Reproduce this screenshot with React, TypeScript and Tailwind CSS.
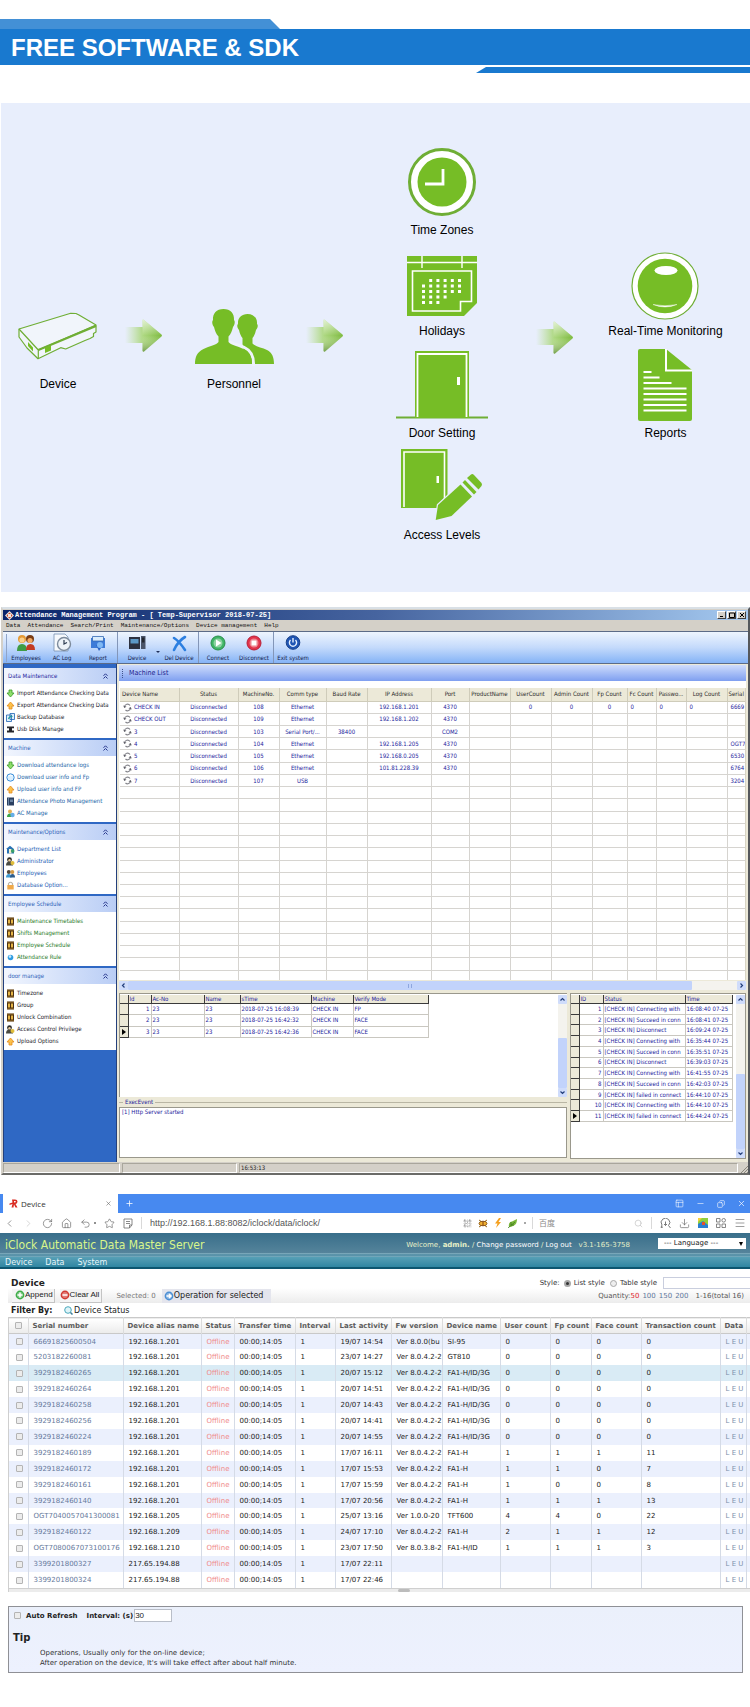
import type { ReactNode } from 'react';
import {
  ChevronLeft, ChevronRight, RotateCw, House, Undo2, Star, QrCode, Search,
  Menu, Download, PanelsTopLeft, Minus, Copy, X, Plus,
} from 'lucide-react';

const G = '#76bd26';

/* ---------- workflow drawings ---------- */

function DeviceIcon() {
  return (
    <svg width="80" height="48" viewBox="0 0 80 48" fill="none" stroke="#6fae35" strokeWidth="1.2" strokeLinejoin="round">
      <path fill="#f1f5fb" d="M1 17 52.7 1.3 58 1.5 61 3 78 13v7l-2.500 1.500v3L72 26.500l-5 2L47.700 37l-5-1.300L20 46.700 9 36 1 25z" />
      <path d="M1 17 20.300 38v8.700M20.300 38 78 13" />
      <path strokeWidth="2" d="M20.300 38 78 14" />
      <path fill={G} stroke="none" d="M27 35.500 33 33.500v5l-6 2.500zM10 30l5 5.500v4L10 34z" />
    </svg>
  );
}

function FlowArrow() {
  return (
    <svg width="38" height="34" viewBox="0 0 38 34">
      <defs>
        <linearGradient id="tail" x1="0" x2="1" y1="0" y2="0">
          <stop offset="0" stopColor="#b5dd8a" stopOpacity="0" />
          <stop offset=".5" stopColor="#a9d678" stopOpacity=".95" />
          <stop offset="1" stopColor="#7dba3e" />
        </linearGradient>
        <linearGradient id="shade" x1="0" x2="0" y1="0" y2="1">
          <stop offset="0" stopColor="#fff" stopOpacity=".65" />
          <stop offset=".5" stopColor="#fff" stopOpacity="0" />
          <stop offset="1" stopColor="#4f7a2c" stopOpacity=".6" />
        </linearGradient>
      </defs>
      <path d="M0 8h17.500V1.500q0-1.500 1.500-.5L36.500 15.500q1 1 0 2L19 32.500q-1.500.5-1.500-1V24H0z" fill="url(#tail)" />
      <path d="M17.500 8V1.500q0-1.500 1.500-.5L36.500 15.500q1 1 0 2L19 32.500q-1.500.5-1.500-1z" fill="url(#shade)" />
    </svg>
  );
}

function PersonnelIcon() {
  return (
    <svg width="79" height="57" viewBox="0 0 79 57" fill={G}>
      <path d="M52.500 5c-6 0-10 4-9.500 10-1.500 1-.5 4.500 1 6 .8 3.500 1.800 6 3.500 8v6l4 20H79c0-7-2-11.500-7-14-5-2.400-12-3.500-14.500-6.500V29c1.700-2 2.700-4.500 3.500-8 1.500-1.500 2.500-5 1-6 .5-6-3.500-10-9.500-10z" />
      <path stroke="#eef3fb" strokeWidth="3" d="M58.500 57c.5-9-1.500-15-9-18.500-6-3-13-3.500-15-6.500" fill="none" />
      <path d="M28.500 0c-7 0-11 4.500-10.500 11-1.500 1.500-.5 5.500 1 7 1 4 2 7 4.500 9.500V33c-2 3-9 4-15 7C2 43 0 48 0 55h57c0-7-2-12-8.500-15-6-3-13-4-15-7v-5.500C36 25 37 22 38 18c1.500-1.500 2.500-5.500 1-7 .5-6.500-3.500-11-10.500-11z" />
    </svg>
  );
}

function ClockIcon() {
  return (
    <svg width="70" height="70" viewBox="0 0 70 70">
      <circle cx="35" cy="35" r="32.500" fill="#fff" stroke="#6fae35" strokeWidth="3" />
      <circle cx="35" cy="35" r="24.500" fill={G} />
      <path d="M36 22v15H18" fill="none" stroke="#fff" strokeWidth="2.800" />
    </svg>
  );
}

const DAYS = [[1, 2, 3, 4, 5], [0, 1, 2, 3, 4, 5], [0, 1, 2, 3, 4, 5], [0, 1, 2, 3], [0, 1, 2]];

function CalendarIcon() {
  return (
    <svg width="70" height="60" viewBox="0 0 70 60">
      <path d="M0 0h70v47L57 60H0z" fill={G} />
      <path d="M0 6.500h70M15 0v12M55 0v12" stroke="#fff" strokeWidth="1.400" />
      <path d="M5.500 15h59v30.500h-11V55h-48z" fill="none" stroke="#fff" strokeWidth="1.600" />
      {DAYS.map((row, r) =>
        row.map((c) => <rect key={`${r}-${c}`} x={15 + c * 7.2} y={23 + r * 5.5} width="3" height="3" fill="#fff" />),
      )}
    </svg>
  );
}

function DoorIcon() {
  return (
    <svg width="92" height="68" viewBox="0 0 92 68">
      <path d="M0 66.500h92" stroke="#6fae35" strokeWidth="2" />
      <path d="M19 0h54v67H19z" fill={G} />
      <path d="M21.500 66V3h49v63" fill="none" stroke="#fff" strokeWidth="1.800" />
      <path d="M61 26h3v8h-3z" fill="#fff" />
    </svg>
  );
}

function AccessIcon() {
  return (
    <svg width="82" height="72" viewBox="0 0 82 72">
      <path d="M0 0h46.500v59H0z" fill={G} />
      <path d="M3 58V3h40.500v55" fill="none" stroke="#fff" strokeWidth="1.600" />
      <path d="M35.500 27h2.500v7h-2.500z" fill="#fff" />
      <g fill={G} stroke="#e8eefc" strokeWidth="2.400" paintOrder="stroke" strokeLinejoin="round">
        <path d="M34.700 71 37 56 59.500 35.500 71 47.500 50.500 67z" />
        <path d="m61.500 33.500 2.500-2.500 11.500 12-2.500 2.500z" strokeWidth="1.200" />
        <path d="m66 29 4-3.500q1.500-1 3 .5l7.500 8q1 1.500 0 3l-3 3.500z" strokeWidth="1.200" />
      </g>
    </svg>
  );
}

function MonitorIcon() {
  return (
    <svg width="68" height="68" viewBox="0 0 68 68">
      <circle cx="34" cy="34" r="33" fill="#fff" stroke="#6fae35" strokeWidth="1.200" />
      <circle cx="34" cy="34" r="27.300" fill={G} />
      <ellipse cx="35" cy="18.500" rx="11.500" ry="4.500" fill="#fff" />
      <path d="M22 52.500q12 5 24 0-12 2.500-24 0z" fill="#fff" stroke="#fff" strokeWidth=".4" />
    </svg>
  );
}

function ReportIcon() {
  return (
    <svg width="54" height="72" viewBox="0 0 54 72">
      <path d="M2 0h26l26 21v49q0 2-2 2H2q-2 0-2-2V2q0-2 2-2z" fill={G} />
      <path d="M28 0v21.500h26" fill="none" stroke="#fff" strokeWidth="2" />
      <path d="M5.500 23h8M5.500 28.500h16M5.500 34h28M5.500 39.500h43M5.500 45h43M5.500 50.500h43M5.500 56h43M5.500 61.500h43" stroke="#fff" strokeWidth="1.800" />
    </svg>
  );
}

function Node({ label, gap, children }: { label: string; gap: string; children: ReactNode }) {
  return (
    <figure className={`flex flex-col items-center ${gap}`}>
      {children}
      <figcaption className="whitespace-nowrap text-xs leading-4 text-black">{label}</figcaption>
    </figure>
  );
}

function Workflow() {
  return (
    <section className="mt-[30px] ml-px grid min-h-[489px] grid-cols-[114fr_58fr_122fr_60fr_174fr_52fr_169fr] justify-items-center bg-[#e8eefc]">
      <div className="pt-[209px]"><Node label="Device" gap="gap-4"><DeviceIcon /></Node></div>
      <div className="pt-[216px]"><FlowArrow /></div>
      <div className="pt-[206px]"><Node label="Personnel" gap="gap-[10px]"><PersonnelIcon /></Node></div>
      <div className="pt-[216px]"><FlowArrow /></div>
      <div className="flex flex-col items-center gap-3 pt-[44px]">
        <Node label="Time Zones" gap="gap-[5px]"><ClockIcon /></Node>
        <div className="pt-[6px]"><Node label="Holidays" gap="gap-[7px]"><CalendarIcon /></Node></div>
        <Node label="Door Setting" gap="gap-[6px]"><DoorIcon /></Node>
        <div className="-mt-1"><Node label="Access Levels" gap="gap-[6px]"><AccessIcon /></Node></div>
      </div>
      <div className="pt-[218px]"><FlowArrow /></div>
      <div className="flex flex-col items-center gap-[10px] pt-[149px]">
        <Node label="Real-Time Monitoring" gap="gap-[3px]"><MonitorIcon /></Node>
        <Node label="Reports" gap="gap-1"><ReportIcon /></Node>
      </div>
    </section>
  );
}

/* ---------- attendance program ---------- */

type IconKind = 'down' | 'up' | 'pages' | 'usb' | 'globe' | 'photo' | 'group' | 'house' | 'admin' | 'staff' | 'lock' | 'film' | 'ball';

function SmallIcon({ kind }: { kind: IconKind }) {
  return (
    <svg width="9" height="9" viewBox="0 0 9 9" className="shrink-0">
      {kind === 'down' && <path d="M3 1h3v3h2L4.500 8 1 4h2z" fill="#8ede6a" stroke="#3b9a2a" strokeWidth=".8" />}
      {kind === 'up' && <path d="M3 8h3V5h2L4.500 1 1 5h2z" fill="#fbc04a" stroke="#e58a1c" strokeWidth=".8" />}
      {kind === 'pages' && (
        <>
          <path d="M.5 2h5v6.500h-5zM4 .5h4.500v6H4z" fill="#dff0fb" stroke="#1e62b4" strokeWidth=".8" />
          <path d="M2.500 6q1-3 4-2.500" fill="none" stroke="#1f9a9a" strokeWidth="1.200" />
        </>
      )}
      {kind === 'usb' && <path d="M1 1.500h7v1.700H6v2.300h2v2H1v-2h2V3.200H1z" fill="#26262b" />}
      {kind === 'globe' && (
        <>
          <circle cx="4.500" cy="4.500" r="3.700" fill="#d9efff" stroke="#3f8fd8" />
          <path d="M2.500 3q2-1.500 4 0" fill="none" stroke="#fff" />
        </>
      )}
      {kind === 'ball' && (
        <>
          <circle cx="4.500" cy="4.500" r="2.800" fill="#2f9be0" />
          <circle cx="4" cy="3.600" r="1.300" fill="#c5e8fc" />
        </>
      )}
      {kind === 'photo' && (
        <>
          <path d="M1 .5h7v8H1z" fill="#2a3f60" />
          <path d="M2 1h1v7H2zM4 2.500h3V5H4z" fill="#6a84a4" />
        </>
      )}
      {kind === 'group' && (
        <>
          <circle cx="4" cy="2.500" r="2" fill="#e3b057" />
          <path d="M1 8q0-3.500 3-3.500T7 8z" fill="#3ea54a" />
          <circle cx="6.500" cy="6" r="2.200" fill="#67aee8" />
        </>
      )}
      {kind === 'house' && (
        <>
          <path d="M0 4 4 .8 8 4v4.500H1V4z" fill="#2a72b4" />
          <path d="M3 4h2.500v4.500H3z" fill="#f5f0d0" />
          <circle cx="6.700" cy="6" r="1.800" fill="#3aa06a" />
        </>
      )}
      {kind === 'admin' && (
        <>
          <circle cx="3.500" cy="2.700" r="2.400" fill="#2a2a26" />
          <path d="M0 8.500q0-4 3.500-4T7 8.500z" fill="#4a4a42" />
          <circle cx="6.500" cy="6" r="2" fill="#e0bd3a" />
          <circle cx="3.500" cy="3.300" r="1.200" fill="#e8c89a" />
        </>
      )}
      {kind === 'staff' && (
        <>
          <circle cx="2.800" cy="3" r="2" fill="#53483a" />
          <circle cx="6.300" cy="3" r="2" fill="#d49a45" />
          <path d="M0 8.500q0-3.500 2.800-3.500t2.800 3.500z" fill="#3f9ad0" />
          <path d="M4 8.500q0-3.500 2.500-3.500T9 8.500z" fill="#2f5c8c" />
        </>
      )}
      {kind === 'lock' && (
        <>
          <path d="M2.500 4V2.500q2-2.500 4 0V4" fill="none" stroke="#b8b4a8" strokeWidth="1.200" />
          <path d="M1.300 4h6.400v4.500H1.300z" fill="#f0a94a" />
        </>
      )}
      {kind === 'film' && (
        <>
          <path d="M1 .5h7v8H1z" fill="#4a2f12" />
          <path d="M2 2.500h2v4H2zM5 2.500h2v4H5z" fill="#e6b546" />
          <path d="M1 1.200h7M1 7.800h7" stroke="#b98a30" strokeWidth=".6" />
        </>
      )}
    </svg>
  );
}

const SIDE: { title: string; titleColor: string; color: string; items: [IconKind, string][] }[] = [
  {
    title: 'Data Maintenance', titleColor: 'text-[#1d1d9c]', color: 'text-[#20202a]',
    items: [['down', 'Import Attendance Checking Data'], ['up', 'Export Attendance Checking Data'], ['pages', 'Backup Database'], ['usb', 'Usb Disk Manage']],
  },
  {
    title: 'Machine', titleColor: 'text-[#2c62b8]', color: 'text-[#2266a8]',
    items: [['down', 'Download attendance logs'], ['globe', 'Download user info and Fp'], ['up', 'Upload user info and FP'], ['photo', 'Attendance Photo Management'], ['group', 'AC Manage']],
  },
  {
    title: 'Maintenance/Options', titleColor: 'text-[#2c62b8]', color: 'text-[#1c5cb4]',
    items: [['house', 'Department List'], ['admin', 'Administrator'], ['staff', 'Employees'], ['lock', 'Database Option...']],
  },
  {
    title: 'Employee Schedule', titleColor: 'text-[#2c62b8]', color: 'text-[#1f7a1f]',
    items: [['film', 'Maintenance Timetables'], ['film', 'Shifts Management'], ['film', 'Employee Schedule'], ['ball', 'Attendance Rule']],
  },
  {
    title: 'door manage', titleColor: 'text-[#2c62b8]', color: 'text-[#20202a]',
    items: [['film', 'Timezone'], ['film', 'Group'], ['film', 'Unlock Combination'], ['admin', 'Access Control Privilege'], ['up', 'Upload Options']],
  },
];

function Sidebar() {
  return (
    <nav className="flex w-[114px] shrink-0 flex-col gap-[2px] border-x border-[#24407c] bg-[#2f68c4] pt-1">
      {SIDE.map((g) => (
        <section key={g.title} className="bg-white">
          <h3 className={`flex h-4 items-center justify-between bg-linear-to-r from-[#f2f6fe] to-[#b9cdf5] px-1 ${g.titleColor}`}>
            {g.title}
            <svg width="5" height="6" viewBox="0 0 5 6" className="mr-1" fill="none" stroke="#26368c"><path d="m.5 2.800 2-2 2 2M.5 5.500l2-2 2 2" /></svg>
          </h3>
          <ul className="pt-[3px] pb-[3px]">
            {g.items.map(([k, t]) => (
              <li key={t}>
                <button className={`flex h-3 items-center gap-[2px] pl-[2px] whitespace-nowrap ${g.color}`}><SmallIcon kind={k} />{t}</button>
              </li>
            ))}
          </ul>
        </section>
      ))}
    </nav>
  );
}

function ToolButton({ label, children }: { label: string; children: ReactNode }) {
  return (
    <button className="flex w-9 flex-col items-center gap-px whitespace-nowrap text-[#12204a]">
      <svg width="20" height="20" viewBox="0 0 20 20">{children}</svg>
      {label}
    </button>
  );
}

const Divider = () => <i className="mx-px h-full w-px bg-[#8396b8]" />;

function AppToolbar() {
  return (
    <div className="flex h-[33px] items-center border-y border-[#5c6b86] bg-linear-to-b from-[#eef5fe] via-[#c4dafb] to-[#85b3f6] pl-[3px]">
      <i className="mr-px h-7 w-px bg-[#8fa4c8]" />
      <ToolButton label="Employees">
        <circle cx="6" cy="6" r="4" fill="#e59a35" /><circle cx="14" cy="6" r="4" fill="#7a3d14" /><circle cx="14" cy="7.500" r="2.600" fill="#f2a964" />
        <circle cx="6" cy="7" r="2.600" fill="#fbd08a" />
        <path d="M1 18q0-7 5-7t5 7z" fill="#3f9c44" /><path d="M10 17q0-6 4.500-6t4.500 6z" fill="#c33b22" />
      </ToolButton>
      <ToolButton label="AC Log">
        <path d="M2 1h11l3 3v14H2z" fill="#f6f9fd" stroke="#7690b0" strokeWidth=".8" />
        <circle cx="12" cy="11" r="6.500" fill="#eef3f8" stroke="#7d8b9c" strokeWidth="1.400" /><path d="M12 7v4l3-1.500" fill="none" stroke="#2e3c50" strokeWidth="1.200" />
      </ToolButton>
      <ToolButton label="Report">
        <path d="M3 5h14v10H3z" fill="#3d7bd8" /><path d="M4.500 3.500h11V8h-11z" fill="#d9ecfc" stroke="#3569b4" strokeWidth=".8" /><path d="m8 12 3 6 4-6z" fill="#2a64c6" /><circle cx="12" cy="12" r="3" fill="#7fb8f4" />
      </ToolButton>
      <Divider />
      <ToolButton label="Device">
        <path d="M2 4h11v12H2z" fill="#2c3140" /><path d="M3.500 6h8v4.500h-8z" fill="#5c98c6" /><path d="M14 3h4.500v13H14z" fill="#4a5468" /><path d="M15 4.500h2.500v5H15z" fill="#23272e" />
      </ToolButton>
      <i className="mx-px mt-2 border-x-2 border-t-2 border-x-transparent border-t-[#1f2f58]" />
      <ToolButton label="Del Device">
        <path d="M5 5q5 3 11 12M16 4Q9 8 5 17" fill="none" stroke="#2c7fe0" strokeWidth="2.600" strokeLinecap="round" />
      </ToolButton>
      <Divider />
      <ToolButton label="Connect">
        <circle cx="10" cy="10" r="7" fill="#3fb566" stroke="#2b8d4a" /><circle cx="10" cy="10" r="4.500" fill="#8ed3a2" /><path d="m8 6.500 5.500 3.500L8 13.500z" fill="#fff" />
      </ToolButton>
      <ToolButton label="Disconnect">
        <circle cx="10" cy="10" r="7" fill="#e2324a" stroke="#b81f36" /><circle cx="10" cy="10" r="4.500" fill="#ee8490" /><path d="M7.500 7.500h5v5h-5z" fill="#fff" />
      </ToolButton>
      <Divider />
      <ToolButton label="Exit system">
        <circle cx="10" cy="9.500" r="6.800" fill="#1f55b4" stroke="#173f88" /><path d="M7.500 7a3.600 3.600 0 1 0 5 0M10 5v4.500" fill="none" stroke="#e8f2ff" strokeWidth="1.400" />
      </ToolButton>
    </div>
  );
}

const M_COLS = [59, 59, 41, 47, 41, 64, 38, 41, 41, 41, 35, 29, 30, 41, 18];
const M_HEAD = ['Device Name', 'Status', 'MachineNo.', 'Comm type', 'Baud Rate', 'IP Address', 'Port', 'ProductName', 'UserCount', 'Admin Count', 'Fp Count', 'Fc Count', 'Passwo...', 'Log Count', 'Serial'];
const D = 'Disconnected';
const M_ROWS: string[][] = [
  ['CHECK IN', D, '108', 'Ethernet', '', '192.168.1.201', '4370', '', '0', '0', '0', '0', '0', '0', '6669'],
  ['CHECK OUT', D, '109', 'Ethernet', '', '192.168.1.202', '4370', '', '', '', '', '', '', '', ''],
  ['3', D, '103', 'Serial Port/...', '38400', '', 'COM2', '', '', '', '', '', '', '', ''],
  ['4', D, '104', 'Ethernet', '', '192.168.1.205', '4370', '', '', '', '', '', '', '', 'OGT7'],
  ['5', D, '105', 'Ethernet', '', '192.168.0.205', '4370', '', '', '', '', '', '', '', '6530'],
  ['6', D, '106', 'Ethernet', '', '101.81.228.39', '4370', '', '', '', '', '', '', '', '6764'],
  ['7', D, '107', 'USB', '', '', '', '', '', '', '', '', '', '', '3204'],
];
const M_ALL = [...M_ROWS, ...Array.from({ length: 16 }, () => M_HEAD.map(() => ''))];

function SyncIcon() {
  return (
    <svg width="9" height="9" viewBox="0 0 9 9" className="shrink-0">
      <path d="M1.500 4A3 3 0 0 1 7 2.500M7.500 5A3 3 0 0 1 2.500 7" fill="none" stroke="#85858c" strokeWidth="1.200" />
      <path d="M.3 2.500 1.200 5 3.500 3.800zM8.700 6.500 7.800 4 5.500 5.200z" fill="#5f5f68" />
    </svg>
  );
}

function MachineTable() {
  return (
    <div className="h-[292px] overflow-hidden border-r border-[#d8d4c4]">
      <table className="h-[295px] w-full table-fixed border-collapse">
        <colgroup>{M_COLS.map((w, i) => <col key={i} style={{ width: w }} />)}</colgroup>
        <thead>
          <tr className="h-[13px] bg-[#ece9d8] text-[#2a2a2a]">
            {M_HEAD.map((h, i) => (
              <th key={h} className={`border-b border-[#cfccba] p-0 font-normal whitespace-nowrap ${i < 14 ? 'border-r' : ''} ${i === 0 ? 'pl-[2px] text-left' : 'text-center'}`}>{h}</th>
            ))}
          </tr>
        </thead>
        <tbody>
          {M_ALL.map((r, ri) => (
            <tr key={ri} className="h-3 text-[#1c1c9c]">
              {r.map((v, i) => (
                <td key={i} className={`border-b border-[#d6d4d0] p-0 whitespace-nowrap ${i < 14 ? 'border-r' : ''} ${i === 0 || i === 14 ? 'pl-[3px]' : i > 10 ? 'pl-[3px]' : 'text-center'}`}>
                  {i === 0 && v ? <span className="flex items-center gap-[2px]"><SyncIcon />{v}</span> : v}
                </td>
              ))}
            </tr>
          ))}
        </tbody>
      </table>
    </div>
  );
}

function ArrowKey({ d, label }: { d: string; label: string }) {
  return (
    <button aria-label={label} className="flex size-[9px] shrink-0 items-center justify-center rounded-[1px] bg-[#cfdcfb]">
      <svg width="5" height="5" viewBox="0 0 5 5" fill="none" stroke="#24407c" strokeWidth="1.200"><path d={d} /></svg>
    </button>
  );
}

function VScroll({ thumb }: { thumb: string }) {
  return (
    <div className="ml-auto flex w-[9px] shrink-0 flex-col justify-between bg-[#f4f3ee]">
      <ArrowKey label="Scroll up" d="m.5 3.500 2-2 2 2" />
      <div className={`mt-auto rounded-[1px] bg-[#c2d3fb] ${thumb}`} />
      <ArrowKey label="Scroll down" d="m.5 1.500 2 2 2-2" />
    </div>
  );
}

function LogGrid({ cols, head, rows, width, height }: { cols: number[]; head: string[]; rows: string[][]; width: string; height: string }) {
  return (
    <table className={`table-fixed border-collapse self-start ${width} ${height}`}>
      <colgroup><col style={{ width: 8 }} />{cols.map((w, i) => <col key={i} style={{ width: w }} />)}</colgroup>
      <thead>
        <tr className="bg-[#ece9d8] text-[#1c1c9c]">
          <th className="border-r border-b border-[#3a3a3a] p-0" />
          {head.map((h) => <th key={h} className="border-r border-b border-[#3a3a3a] p-0 pl-px text-left font-normal">{h}</th>)}
        </tr>
      </thead>
      <tbody>
        {rows.map((r, ri) => (
          <tr key={ri} className="text-[#1c1c9c]">
            <td className="border-r border-b border-[#3a3a3a] bg-[#ece9d8] p-0">
              {ri === rows.length - 1 && <svg width="4" height="6" viewBox="0 0 4 6" className="mx-auto"><path d="M0 0l4 3-4 3z" /></svg>}
            </td>
            {r.map((v, i) => (
              <td key={i} className={`overflow-hidden border-r border-b border-[#c9c7c0] p-0 whitespace-nowrap ${i === 0 ? 'pr-px text-right' : 'pl-px'}`}>{v}</td>
            ))}
          </tr>
        ))}
      </tbody>
    </table>
  );
}

const PUNCHES = [
  ['1', '23', '23', '2018-07-25 16:08:39', 'CHECK IN', 'FP'],
  ['2', '23', '23', '2018-07-25 16:42:32', 'CHECK IN', 'FACE'],
  ['3', '23', '23', '2018-07-25 16:42:36', 'CHECK IN', 'FACE'],
];
const EVENTS = [
  ['1', '[CHECK IN] Connecting with', '16:08:40 07-25'],
  ['2', '[CHECK IN] Succeed in conn', '16:08:41 07-25'],
  ['3', '[CHECK IN] Disconnect', '16:09:24 07-25'],
  ['4', '[CHECK IN] Connecting with', '16:35:44 07-25'],
  ['5', '[CHECK IN] Succeed in conn', '16:35:51 07-25'],
  ['6', '[CHECK IN] Disconnect', '16:39:03 07-25'],
  ['7', '[CHECK IN] Connecting with', '16:41:55 07-25'],
  ['8', '[CHECK IN] Succeed in conn', '16:42:03 07-25'],
  ['9', '[CHECK IN] failed in connect', '16:44:10 07-25'],
  ['10', '[CHECK IN] Connecting with', '16:44:10 07-25'],
  ['11', '[CHECK IN] failed in connect', '16:44:24 07-25'],
];

function WinButton({ label, d }: { label: string; d: string }) {
  return (
    <button aria-label={label} className="flex h-2 w-[9px] items-center justify-center border border-t-white border-r-[#404040] border-b-[#404040] border-l-white bg-[#d4d0c8]">
      <svg width="6" height="6" viewBox="0 0 6 6" fill="none" stroke="#000"><path d={d} /></svg>
    </button>
  );
}

function AttendanceApp() {
  return (
    <section className="mt-[15px] ml-px border-2 border-t-[#d9e0e6] border-r-[#55585c] border-b-[#6b6b68] border-l-[#d4d0c8] bg-[#d4d0c8] pt-px font-['DejaVu_Sans_Condensed','DejaVu_Sans',sans-serif] text-[6px] leading-[8px]">
      <div className="flex h-[10px] items-center gap-px bg-linear-to-r from-[#0a246a] via-[#46649f] to-[#a6caf0] pr-[2px] pl-[2px] text-white">
        <svg width="9" height="9" viewBox="0 0 9 9"><path d="M4.500 0 9 4.500 4.500 9 0 4.500z" fill="#f0e6e0" /><path d="M4.500 1.500 6 3H3zM1.500 4.500 3 3v3zM7.500 4.500 6 6V3zM4.500 7.500 3 6h3z" fill="#c8452c" /></svg>
        <b className="mr-auto font-['Liberation_Mono',monospace] text-[7px] whitespace-pre">Attendance Management Program - [ Temp-Supervisor 2018-07-25]</b>
        <WinButton label="Minimize" d="M1 4.500h3" />
        <WinButton label="Maximize" d="M.5 1h5v4.500h-5z" />
        <WinButton label="Close" d="m1 1 4 4M5 1 1 5" />
      </div>
      <div className="flex h-[11px] items-center gap-[7px] pt-px pl-[3px] font-['Liberation_Mono',monospace] text-[6px] text-[#111]">
        {['Data', 'Attendance', 'Search/Print', 'Maintenance/Options', 'Device management', 'Help'].map((m) => <button key={m}>{m}</button>)}
      </div>
      <AppToolbar />
      <div className="flex h-[498px]">
        <Sidebar />
        <div className="flex min-w-0 flex-1 flex-col bg-[#ece9d8] pr-[2px] pl-[2px]">
          <h2 className="mt-px flex h-4 items-center gap-[6px] bg-linear-to-b from-[#cfdcfb] to-[#7f9ff0] pl-[3px] text-[7px] text-[#1d1d8c]">
            <i className="h-[9px] border-l border-dotted border-[#40538c]" />
            Machine List
          </h2>
          <div className="bg-white pt-[7px] pl-px"><MachineTable /></div>
          <div className="mt-px flex h-[9px] bg-[#f4f3ee]">
            <ArrowKey label="Scroll left" d="m3.500.5-2 2 2 2" />
            <div className="mr-auto flex w-[90%] items-center justify-center rounded-[1px] bg-[#c2d3fb] text-[#8ea6de]"><i className="h-1 w-1 border-x border-current" /></div>
            <ArrowKey label="Scroll right" d="m1.500.5 2 2-2 2" />
          </div>
          <div className="mt-[3px] flex min-h-0 flex-1 gap-[3px]">
            <div className="flex min-w-0 flex-1 flex-col">
              <div className="flex h-[104px] border-t border-l border-[#9a988c] bg-white pt-px">
                <LogGrid width="w-[308px]" height="h-[43px]" cols={[23, 53, 36, 71, 42, 75]} head={['Id', 'Ac-No', 'Name', 'sTime', 'Machine', 'Verify Mode']} rows={PUNCHES} />
                <VScroll thumb="h-[50px]" />
              </div>
              <div className="flex h-[10px] items-center gap-[2px] text-[#1c1c9c]">
                <i className="h-px w-1 bg-[#b9b6a4]" />ExecEvent<i className="h-px flex-1 bg-[#b9b6a4]" />
              </div>
              <p className="mb-1 flex-1 border border-[#9a988c] bg-white px-[2px] text-[#1c1c9c]">[1] Http Server started</p>
            </div>
            <div className="mb-[3px] flex w-[176px] border border-[#9a988c] bg-white pt-px">
              <LogGrid width="w-[161px]" height="h-[127px]" cols={[24, 82, 47]} head={['ID', 'Status', 'Time']} rows={EVENTS} />
              <VScroll thumb="h-[75px]" />
            </div>
          </div>
        </div>
      </div>
      <div className="flex h-[11px] items-center gap-[2px] text-[#222]">
        <i className="h-[10px] w-[117px] border border-[#a9a69c] border-r-white border-b-white" />
        <i className="h-[10px] w-[115px] border border-[#a9a69c] border-r-white border-b-white" />
        <span className="h-[10px] flex-1 border border-[#a9a69c] border-r-white border-b-white pl-px">16:53:13</span>
        <svg width="8" height="8" viewBox="0 0 8 8" stroke="#8a877c" className="self-end"><path d="M1 8 8 1M4 8l4-4M7 8l1-1" /></svg>
      </div>
    </section>
  );
}

/* ---------- web console ---------- */

const C_COLS = [19, 95, 78, 33, 61, 40, 56, 51, 58, 50, 41, 50, 79, 26, 5];
const C_HEAD = ['Serial number', 'Device alias name', 'Status', 'Transfer time', 'Interval', 'Last activity', 'Fw version', 'Device name', 'User count', 'Fp count', 'Face count', 'Transaction count', 'Data'];
const V = 'Ver 8.0.4.2-2';
const C_ROWS: string[][] = [
  ['66691825600504', '192.168.1.201', '19/07 14:54', 'Ver 8.0.0(bu', 'SI-95', '0', '0', '0', '0'],
  ['5203182260081', '192.168.1.201', '23/07 14:27', V, 'GT810', '0', '0', '0', '0'],
  ['3929182460265', '192.168.1.201', '20/07 15:12', V, 'FA1-H/ID/3G', '0', '0', '0', '0'],
  ['3929182460264', '192.168.1.201', '20/07 14:51', V, 'FA1-H/ID/3G', '0', '0', '0', '0'],
  ['3929182460258', '192.168.1.201', '20/07 14:43', V, 'FA1-H/ID/3G', '0', '0', '0', '0'],
  ['3929182460256', '192.168.1.201', '20/07 14:41', V, 'FA1-H/ID/3G', '0', '0', '0', '0'],
  ['3929182460224', '192.168.1.201', '20/07 14:55', V, 'FA1-H/ID/3G', '0', '0', '0', '0'],
  ['3929182460189', '192.168.1.201', '17/07 16:11', V, 'FA1-H', '1', '1', '1', '11'],
  ['3929182460172', '192.168.1.201', '17/07 15:53', V, 'FA1-H', '1', '1', '0', '7'],
  ['3929182460161', '192.168.1.201', '17/07 15:59', V, 'FA1-H', '1', '0', '0', '8'],
  ['3929182460140', '192.168.1.201', '17/07 20:56', V, 'FA1-H', '1', '1', '1', '13'],
  ['OGT7040057041300081', '192.168.1.205', '25/07 13:16', 'Ver 1.0.0-20', 'TFT600', '4', '4', '0', '22'],
  ['3929182460122', '192.168.1.209', '24/07 17:10', V, 'FA1-H', '2', '1', '1', '12'],
  ['OGT7080067073100176', '192.168.1.210', '23/07 17:50', 'Ver 8.0.3.8-2', 'FA1-H/ID', '1', '1', '1', '3'],
  ['3399201800327', '217.65.194.88', '17/07 22:11', '', '', '', '', '', ''],
  ['3399201800324', '217.65.194.88', '17/07 22:46', '', '', '', '', '', ''],
];

function Check({ label, id }: { label?: string; id?: string }) {
  return <input type="checkbox" id={id} aria-label={label} className="block size-[7px] shrink-0 appearance-none rounded-[1px] border border-[#b4b4b4] bg-[#ececec] checked:bg-[#5b8fd0]" />;
}

function DeviceTable() {
  return (
    <div className="ml-2 overflow-hidden border-l border-[#cfcfcf]">
      <table className="h-[271px] w-full table-fixed border-collapse text-[7px] leading-[10px]">
        <colgroup>{C_COLS.map((w, i) => <col key={i} style={{ width: w }} />)}</colgroup>
        <thead>
          <tr className="h-4 border-y border-[#c9c9c9] bg-linear-to-b from-white to-[#ececec] text-[#5c5c5c]">
            <th className="border-r border-[#dcdcdc] p-0 pl-[6px]"><Check label="Select all" /></th>
            {C_HEAD.map((h) => <th key={h} className="border-r border-[#dcdcdc] p-0 pl-1 text-left font-bold whitespace-nowrap">{h}</th>)}
            <th className="p-0" />
          </tr>
        </thead>
        <tbody>
          {C_ROWS.map(([serial, ip, last, ver, name, ...counts], ri) => (
            <tr key={serial} className={`h-[15px] text-[#222] ${ri === 2 ? 'bg-[#d9ebf5]' : ri % 2 ? 'bg-white' : 'bg-[#ebf0fd]'}`}>
              <td className="border-r border-[#d5dbe6] p-0 pl-[7px]"><Check label={`Select ${serial}`} /></td>
              <td className="border-r border-[#d5dbe6] p-0 pl-[5px] text-[#66799c]"><a href="#device">{serial}</a></td>
              {[ip, 'Offline', '00:00;14:05', '1', last, ver, name, ...counts].map((v, i) => (
                <td key={i} className={`overflow-hidden border-r border-[#d5dbe6] p-0 pl-[5px] whitespace-nowrap ${i === 1 ? 'text-[#f08c8c]' : ''}`}>{v}</td>
              ))}
              <td className="border-r border-[#d5dbe6] p-0 pl-[5px] whitespace-nowrap text-[#7c90ac]">L E U</td>
              <td className="p-0" />
            </tr>
          ))}
        </tbody>
      </table>
      <div className="flex h-1 justify-center border-t border-[#cfcfcf] bg-[#ececec] pl-12"><i className="h-[3px] w-3 rounded-sm bg-[#bcbcbc]" /></div>
    </div>
  );
}

function Dot({ color, d }: { color: string; d: string }) {
  return (
    <svg width="10" height="10" viewBox="0 0 10 10" className="shrink-0">
      <circle cx="5" cy="5" r="4.400" fill={color} /><circle cx="5" cy="5" r="2.900" fill="#fff" opacity=".35" />
      <path d={d} stroke="#fff" strokeWidth="1.500" fill="none" />
    </svg>
  );
}

function BrowserChrome() {
  const sep = <i className="h-3 w-px bg-[#d9d9d9]" />;
  return (
    <>
      <div className="mt-[19px] flex h-[19px] items-center bg-[#4789f0] pl-[3px] text-white">
        <div className="flex h-full w-[115px] items-center gap-[3px] bg-white px-[6px] text-[8px] text-[#333]">
          <svg width="9" height="9" viewBox="0 0 9 9"><path d="M3 .5h3q2.500 0 2.500 2T6.500 5L8.500 8.500H6.500L5 5.500 4.500 8.500h-2L3.500 5 .5 6V4.500L3.500 3.500zM5 2v1.500q2 0 2-.8T5 2z" fill="#d92b22" fillRule="evenodd" /></svg>
          <span className="mr-auto font-['Open_Sans',sans-serif]">Device</span>
          <button aria-label="Close tab"><X size={7} color="#666" /></button>
        </div>
        <button aria-label="New tab" className="ml-[7px]"><Plus size={9} strokeWidth={2} /></button>
        <div className="ml-auto flex items-center gap-3 pr-[4px]">
          <PanelsTopLeft size={9} strokeWidth={1.5} /><Minus size={9} strokeWidth={1.5} /><Copy size={8} strokeWidth={1.8} className="-scale-x-100" /><X size={9} strokeWidth={1.8} />
        </div>
      </div>
      <div className="flex h-5 items-center gap-[8px] bg-white px-1 text-[#6b6b6b]">
        <ChevronLeft size={11} strokeWidth={1.5} />
        <ChevronRight size={11} strokeWidth={1.5} color="#c4c4c4" />
        <RotateCw size={11} strokeWidth={1.5} />
        <House size={11} strokeWidth={1.5} />
        <span className="flex items-center gap-[3px]"><Undo2 size={11} strokeWidth={1.5} /><i className="size-[2px] rounded-full bg-current" /></span>
        <Star size={11} strokeWidth={1.5} />
        <svg width="10" height="11" viewBox="0 0 10 11" fill="none" stroke="currentColor" strokeWidth=".8"><path d="M1 1h8v6L6.500 10H1zM9 7H6.500v3M3 3.500h4M3 5.500h4" /></svg>
        {sep}
        <input aria-label="Address" readOnly defaultValue="http://192.168.1.88:8082/iclock/data/iclock/" className="min-w-0 flex-1 font-['Liberation_Sans',sans-serif] text-[9px] leading-[12px] text-[#555]" />
        <div className="flex items-center gap-[6px] text-[8px] text-[#8a8a8a]">
          <QrCode size={9} strokeWidth={1.8} />
          <svg width="10" height="9" viewBox="0 0 10 9"><path d="M1 1l3 2M9 1 6 3M1 8l3-2M9 8 6 6" stroke="#9a6a1c" /><ellipse cx="5" cy="4.500" rx="4" ry="2.300" fill="#f0b030" stroke="#7c4a10" strokeWidth=".8" /><path d="M5 2v5" stroke="#7c3a10" strokeWidth="1" /></svg>
          <svg width="8" height="10" viewBox="0 0 8 10"><path d="M5 0 1 5.500h2.500L2 10l5-6H4.500L7 0z" fill="#f5a01e" /></svg>
          <svg width="10" height="9" viewBox="0 0 10 9"><path d="M1 8Q0 3 4 2.500L9 0Q9 5 6 6.500T1 8z" fill="#7ab63a" /><path d="m0 9 7-6M3 3v3h3" stroke="#3f7a20" strokeWidth=".8" fill="none" /></svg>
          <i className="size-[2px] rounded-full bg-current" />
          {sep}
          <span className="font-['Noto_Sans_CJK_SC',sans-serif]">百度</span>
        </div>
        <Search size={9} strokeWidth={1.5} color="#b5b5b5" className="ml-[71px]" />
        {sep}
        <svg width="11" height="11" viewBox="0 0 11 11" fill="none" stroke="currentColor" strokeWidth=".9"><path d="M3 9 1 9.500 2 7A4.300 4.300 0 1 1 8.500 7.500L10.500 10M5.500 3.500v4M4 6l1.500 1.500L7 6" /></svg>
        <Download size={11} strokeWidth={1.5} />
        <svg width="10" height="10" viewBox="0 0 10 10"><path d="M0 0h10v10H0z" fill="#8fd03c" /><path d="M0 6 5 3l5 4v3H0z" fill="#2a7fd0" /><path d="M4 4h3v3H4z" fill="#e7502c" /><path d="M0 0h4L0 4z" fill="#f6d23a" /></svg>
        <svg width="10" height="10" viewBox="0 0 10 10" fill="none" stroke="currentColor" strokeWidth=".8"><path d="M.5.5H4V4H.5zM.5 6H4v3.500H.5zM6 6h3.500v3.500H6z" /><circle cx="7.700" cy="2.300" r="1.800" /></svg>
        <Menu size={12} strokeWidth={1.3} />
      </div>
    </>
  );
}

function Radio({ id, label, on }: { id: string; label: string; on?: boolean }) {
  return (
    <span className="flex items-center gap-[3px]">
      <input type="radio" name="style" id={id} defaultChecked={on} className="size-[7px] appearance-none rounded-full border border-[#a8a8a8] bg-[#eee] checked:border-2 checked:bg-[#333]" />
      <label htmlFor={id}>{label}</label>
    </span>
  );
}

function WebConsole() {
  return (
    <section className="overflow-hidden pb-[33px] font-['DejaVu_Sans',sans-serif] text-[8px] leading-[10px] text-[#222]">
      <BrowserChrome />
      <header className="flex h-5 items-center bg-linear-to-b from-[#386e8a] to-[#55849b] pr-1 pl-[5px]">
        <h1 className="mr-auto pt-[3px] font-['DejaVu_Sans_Condensed','DejaVu_Sans',sans-serif] text-[12px] leading-[14px] whitespace-nowrap text-[#d9f68a]">iClock Automatic Data Master Server</h1>
        <p className="mr-7 pt-[4px] text-[7px] whitespace-pre text-[#e6f0c8]">
          <span>Welcome, </span><b>admin.</b> / <a href="#password" className="text-white">Change password</a> / <a href="#logout" className="text-white">Log out</a>{'   '}v3.1-165-3758
        </p>
        <div className="relative w-[88px]">
          <select aria-label="Language" className="block h-[11px] w-full appearance-none bg-white pl-[6px] text-[7px] leading-[9px] text-[#222]"><option>--- Language ---</option></select>
          <svg width="4" height="4" viewBox="0 0 4 4" className="pointer-events-none absolute top-1 right-[3px]"><path d="M0 0h4L2 4z" /></svg>
        </div>
      </header>
      <div className="h-1 bg-linear-to-b from-[#86b0c0] via-[#4d8aa2] to-[#7db0c2]" />
      <nav className="flex h-3 items-center gap-[13px] border-b-2 border-[#0d5670] bg-linear-to-b from-[#57a0b6] to-[#2f86a2] pt-px pl-[5px] text-[#e8f6fa]">
        {['Device', 'Data', 'System'].map((m) => <button key={m}>{m}</button>)}
      </nav>
      <div className="flex h-[19px] items-center pt-[9px] pl-[11px] text-[7px]">
        <h2 className="mr-auto text-[9px] font-bold">Device</h2>
        <div className="flex items-center gap-[5px] text-[#333]">
          <span className="-mr-px">Style:</span>
          <Radio id="list" label="List style" on />
          <Radio id="tablestyle" label="Table style" />
        </div>
        <input aria-label="Search" className="ml-[6px] h-3 w-[87px] border border-r-0 border-[#c9cede] bg-white" />
      </div>
      <div className="ml-2 flex h-[15px] items-center bg-linear-to-b from-white to-[#ececec] pl-1">
        <button className="flex h-[14px] items-center border-r border-b border-[#c4c4c4] bg-[#f4f4f4] pr-px pl-[3px] font-['Liberation_Sans',sans-serif]"><Dot color="#3fae49" d="M5 2.500v5M2.500 5h5" />Append</button>
        <button className="ml-[5px] flex h-[14px] items-center border-r border-b border-[#c4c4c4] bg-[#f4f4f4] pr-[2px] font-['Liberation_Sans',sans-serif]"><Dot color="#d23a32" d="M2.500 5h5" />Clear All</button>
        <span className="ml-[14px] text-[7px] text-[#777]">Selected: 0</span>
        <button className="ml-[6px] flex h-[14px] items-center bg-[#e4e5ed] pr-2 pl-[2px]"><Dot color="#4c8fd4" d="M2.500 5h4.500M5 3l2 2-2 2" />Operation for selected</button>
        <span className="ml-auto flex gap-[3px] pr-[6px] text-[7px] text-[#5f779c]">
          <span className="text-[#555]">Quantity:<b className="font-normal text-[#e01e2e]">50</b></span><a href="#100">100</a><a href="#150">150</a><a href="#200">200</a><span className="ml-1 text-[#555]">1-16(total 16)</span>
        </span>
      </div>
      <div className="flex h-[14px] items-center pt-px pl-[11px]">
        <b className="w-[53px]">Filter By:</b>
        <svg width="9" height="9" viewBox="0 0 9 9" fill="#dff4f8" stroke="#4aa8bc"><circle cx="4" cy="4" r="3.300" /><path d="m6.500 6.500 2 2" stroke="#3c7f9a" strokeWidth="1.500" /></svg>
        <a href="#status" className="ml-px">Device Status</a>
      </div>
      <DeviceTable />
      <div className="mt-[14px] mr-[7px] ml-2 h-[67px] border border-[#8f9096] bg-linear-to-b from-[#ebf0fb] to-[#edf1fe]">
        <div className="flex h-4 items-center pt-px pl-[5px] text-[7px] font-bold">
          <Check id="auto" />
          <label htmlFor="auto" className="ml-[5px]">Auto Refresh</label>
          <label htmlFor="interval" className="mr-px ml-[9px]">Interval: (s)</label>
          <input id="interval" defaultValue="30" className="h-[13px] w-[38px] border border-[#b9bec8] bg-white font-['Liberation_Sans',sans-serif] text-[8px] font-normal" />
        </div>
        <h3 className="mt-[9px] pl-1 text-[10px] leading-[12px] font-bold">Tip</h3>
        <p className="mt-1 pl-[31px] text-[7px] text-[#333]">Operations, Usually only for the on-line device;<br />After operation on the device, It's will take effect after about half minute.</p>
      </div>
    </section>
  );
}

export default function App() {
  return (
    <main className="overflow-hidden bg-white font-['Liberation_Sans',Arial,sans-serif]">
      <header className="pt-[19px]">
        <div className="h-[10px] w-[280px] bg-[#4390d6] [clip-path:polygon(0_0,270px_0,100%_100%,0_100%)]" />
        <h1 className="flex h-9 items-center bg-[#1979cf] pt-px pl-[11px] text-2xl font-bold text-white">FREE SOFTWARE &amp; SDK</h1>
        <div className="mt-[2px] ml-auto h-[6px] w-[274px] bg-[#1979cf] [clip-path:polygon(10px_0,100%_0,100%_100%,0_100%)]" />
      </header>
      <Workflow />
      <AttendanceApp />
      <WebConsole />
    </main>
  );
}
